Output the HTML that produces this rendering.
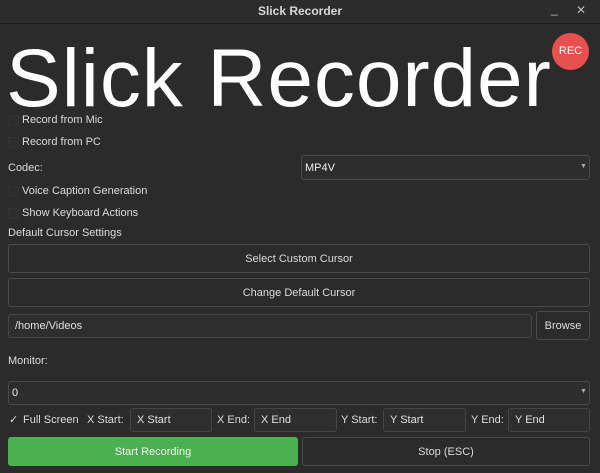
<!DOCTYPE html>
<html><head><style>
body{margin:0;width:600px;height:473px;background:#2b2b2b;font-family:"Liberation Sans",sans-serif;color:#dcdcdc;overflow:hidden;position:relative}
.a{position:absolute}
.t{font-size:11px;line-height:14px}
.cb{position:absolute;width:9px;height:9px;border:1px solid #333;background:#2d2d2d}
.box{position:absolute;border:1px solid #4a4a4a;border-radius:3px;background:#2d2d2d;box-sizing:border-box}
.btn{position:absolute;border:1px solid #4a4a4a;border-radius:3px;background:#2b2b2b;box-sizing:border-box;text-align:center;font-size:11px;color:#dcdcdc}
.inp{position:absolute;border:1px solid #454545;border-radius:3px;background:#2e2e2e;box-sizing:border-box;font-size:11px;padding-left:6px;color:#e0e0e0}
</style></head><body>
<div class="a" style="left:0;top:0;width:600px;height:23px;background:#2c2c2c;border-bottom:1px solid #1e1e1e"></div>
<div class="a" style="left:0;top:4px;width:600px;text-align:center;font-size:12px;font-weight:bold;color:#d8d8d8">Slick Recorder</div>
<div class="a" style="left:551px;top:2px;font-size:12px;color:#bbb">_</div>
<div class="a" style="left:576px;top:3px;font-size:12px;color:#bbb">✕</div>
<div class="a" style="left:6px;top:34px;font-size:82px;line-height:90px;color:#fff;letter-spacing:0.9px">Slick Recorder</div>
<div class="a" style="left:552px;top:33px;width:37px;height:37px;border-radius:50%;background:#e85050;color:#fff;font-size:11px;line-height:37px;text-align:center">REC</div>
<div class="cb" style="left:8px;top:115px"></div><div class="a t" style="left:22px;top:113px">Record from Mic</div>
<div class="cb" style="left:8px;top:137px"></div><div class="a t" style="left:22px;top:135px">Record from PC</div>
<div class="a t" style="left:8px;top:161px">Codec:</div>
<div class="box" style="left:301px;top:155px;width:289px;height:25px"></div>
<div class="a t" style="left:305px;top:161px;color:#eee">MP4V</div>
<div class="a" style="left:580px;top:163px;font-size:7px;color:#aaa">▼</div>
<div class="cb" style="left:8px;top:186px"></div><div class="a t" style="left:22px;top:184px">Voice Caption Generation</div>
<div class="cb" style="left:8px;top:208px"></div><div class="a t" style="left:22px;top:206px">Show Keyboard Actions</div>
<div class="a t" style="left:8px;top:226px">Default Cursor Settings</div>
<div class="btn" style="left:8px;top:244px;width:582px;height:29px;line-height:29px">Select Custom Cursor</div>
<div class="btn" style="left:8px;top:278px;width:582px;height:29px;line-height:29px">Change Default Cursor</div>
<div class="inp" style="left:8px;top:314px;width:524px;height:24px;line-height:22px">/home/Videos</div>
<div class="btn" style="left:536px;top:311px;width:54px;height:29px;line-height:29px">Browse</div>
<div class="a t" style="left:8px;top:354px">Monitor:</div>
<div class="box" style="left:8px;top:381px;width:582px;height:24px"></div>
<div class="a t" style="left:12px;top:386px;color:#eee">0</div>
<div class="a" style="left:580px;top:388px;font-size:7px;color:#aaa">▼</div>
<div class="a t" style="left:9px;top:413px">✓</div>
<div class="a t" style="left:23px;top:413px">Full Screen</div>
<div class="a t" style="left:87px;top:413px">X Start:</div>
<div class="inp" style="left:130px;top:408px;width:82px;height:24px;line-height:22px">X Start</div>
<div class="a t" style="left:217px;top:413px">X End:</div>
<div class="inp" style="left:254px;top:408px;width:83px;height:24px;line-height:22px">X End</div>
<div class="a t" style="left:341px;top:413px">Y Start:</div>
<div class="inp" style="left:383px;top:408px;width:83px;height:24px;line-height:22px">Y Start</div>
<div class="a t" style="left:471px;top:413px">Y End:</div>
<div class="inp" style="left:508px;top:408px;width:82px;height:24px;line-height:22px">Y End</div>
<div class="btn" style="left:8px;top:437px;width:290px;height:29px;line-height:29px;background:#4caf50;border-color:#4caf50;color:#f0f0f0">Start Recording</div>
<div class="btn" style="left:302px;top:437px;width:288px;height:29px;line-height:29px">Stop (ESC)</div>
</body></html>
